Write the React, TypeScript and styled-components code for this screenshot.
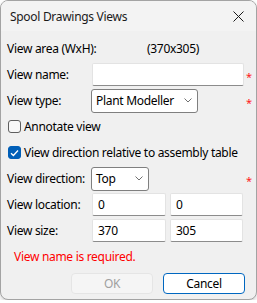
import React, { useState } from "react";
import styled, { createGlobalStyle } from "styled-components";

const GlobalStyle = createGlobalStyle`
  html, body {
    margin: 0;
    padding: 0;
    background: #ffffff;
  }
  * {
    box-sizing: border-box;
  }
`;

const Window = styled.div`
  width: 257px;
  height: 300px;
  display: flex;
  flex-direction: column;
  background: #f0f0f0;
  border: 1px solid #a3a3a3;
  border-radius: 8px;
  overflow: hidden;
  font-family: "Noto Sans", "Open Sans", sans-serif;
  font-size: 12px;
  letter-spacing: -0.3px;
  color: #000;
  box-shadow: 0 2px 4px rgba(0, 0, 0, 0.18);
`;

const TitleBar = styled.div`
  height: 30px;
  flex-shrink: 0;
  display: flex;
  align-items: center;
  justify-content: space-between;
  padding: 0 8px 0 9px;
  background: #f3f3f3;
`;

const Title = styled.span`
  font-size: 12px;
  color: #1a1a1a;
`;

const CloseButton = styled.button`
  width: 20px;
  height: 20px;
  padding: 0;
  border: none;
  background: transparent;
  display: flex;
  align-items: center;
  justify-content: center;
`;

const Body = styled.div`
  display: flex;
  flex-direction: column;
  padding: 6px 0 0 6px;
`;

const FormGrid = styled.div`
  display: grid;
  grid-template-columns: 84px 152px 14px;
  grid-auto-rows: 23px;
  row-gap: 3px;
  align-items: center;
`;

const Label = styled.span`
  white-space: nowrap;
`;

const AreaValue = styled.span`
  padding-left: 56px;
  grid-column: 2 / 4;
`;

const Required = styled.span`
  color: #ff2020;
  padding-left: 3px;
  font-size: 11px;
  line-height: 1;
  margin-top: 3px;
`;

const TextBox = styled.input<{ $width?: number }>`
  width: ${(p) => (p.$width ? `${p.$width}px` : "100%")};
  height: 23px;
  margin-left: 1px;
  padding: 0 5px;
  font: inherit;
  letter-spacing: -0.3px;
  background: #ffffff;
  border: 1px solid #e3e3e3;
  border-bottom-color: #8c8c8c;
  border-radius: 2px;
  outline: none;
`;

const PairRow = styled.div`
  display: flex;
  gap: 3px;
`;

const SelectBox = styled.div<{ $width: number }>`
  width: ${(p) => p.$width}px;
  height: 24px;
  display: flex;
  align-items: center;
  justify-content: space-between;
  padding: 0 5px 0 4px;
  background: #ffffff;
  border: 1px solid #7f7f7f;
  border-radius: 3px;
`;

const CheckRow = styled.label`
  grid-column: 1 / 4;
  display: flex;
  align-items: center;
  gap: 3px;
  white-space: nowrap;
  padding-left: 1px;
`;

const CheckBox = styled.span<{ $checked: boolean }>`
  width: 13px;
  height: 13px;
  display: inline-flex;
  align-items: center;
  justify-content: center;
  border-radius: 3px;
  border: 1px solid ${(p) => (p.$checked ? "#005fb8" : "#5e5e5e")};
  background: ${(p) => (p.$checked ? "#005fb8" : "#f7f7f7")};
`;

const ErrorText = styled.div`
  height: 23px;
  margin-top: 3px;
  padding-left: 7px;
  display: flex;
  align-items: center;
  color: #ff0000;
`;

const ButtonRow = styled.div`
  display: flex;
  justify-content: flex-end;
  gap: 10px;
  padding-right: 11px;
  margin-top: 5px;
`;

const Button = styled.button<{ $primary?: boolean }>`
  width: 82px;
  height: 21px;
  padding: 0;
  font: inherit;
  letter-spacing: -0.3px;
  border-radius: 4px;
  background: ${(p) => (p.$primary ? "#ffffff" : "#f5f5f5")};
  color: ${(p) => (p.$primary ? "#000000" : "#a0a0a0")};
  border: 1px solid ${(p) => (p.$primary ? "#0067c0" : "#e5e5e5")};
`;

const Chevron = () => (
  <svg width="8" height="5" viewBox="0 0 8 5">
    <path d="M0.5 0.5 L4 4 L7.5 0.5" fill="none" stroke="#606060" strokeWidth="0.9" />
  </svg>
);

const Check = () => (
  <svg width="9" height="8" viewBox="0 0 9 8">
    <path d="M1 4.2 L3.4 6.5 L8 1.5" fill="none" stroke="#ffffff" strokeWidth="1.3" />
  </svg>
);

const App = () => {
  const [name, setName] = useState("");
  const [annotate, setAnnotate] = useState(false);
  const [relative, setRelative] = useState(true);

  return (
    <Window>
      <GlobalStyle />
      <TitleBar>
        <Title>Spool Drawings Views</Title>
        <CloseButton aria-label="Close">
          <svg width="11" height="11" viewBox="0 0 11 11">
            <path d="M0.5 0.5 L10.5 10.5 M10.5 0.5 L0.5 10.5" stroke="#1a1a1a" strokeWidth="1" />
          </svg>
        </CloseButton>
      </TitleBar>
      <Body>
        <FormGrid>
          <Label>View area (WxH):</Label>
          <AreaValue>(370x305)</AreaValue>

          <Label>View name:</Label>
          <TextBox value={name} onChange={(e) => setName(e.target.value)} />
          <Required>*</Required>

          <Label>View type:</Label>
          <SelectBox $width={107}>
            <span>Plant Modeller</span>
            <Chevron />
          </SelectBox>
          <Required>*</Required>

          <CheckRow onClick={() => setAnnotate(!annotate)}>
            <CheckBox $checked={annotate}>{annotate && <Check />}</CheckBox>
            Annotate view
          </CheckRow>

          <CheckRow onClick={() => setRelative(!relative)}>
            <CheckBox $checked={relative}>{relative && <Check />}</CheckBox>
            View direction relative to assembly table
          </CheckRow>

          <Label>View direction:</Label>
          <SelectBox $width={58}>
            <span>Top</span>
            <Chevron />
          </SelectBox>
          <Required>*</Required>

          <Label>View location:</Label>
          <PairRow>
            <TextBox $width={74} defaultValue="0" />
            <TextBox $width={73} defaultValue="0" />
          </PairRow>
          <span />

          <Label>View size:</Label>
          <PairRow>
            <TextBox $width={74} defaultValue="370" />
            <TextBox $width={73} defaultValue="305" />
          </PairRow>
          <span />
        </FormGrid>
        <ErrorText>View name is required.</ErrorText>
        <ButtonRow>
          <Button disabled>OK</Button>
          <Button $primary>Cancel</Button>
        </ButtonRow>
      </Body>
    </Window>
  );
};

export default App;
